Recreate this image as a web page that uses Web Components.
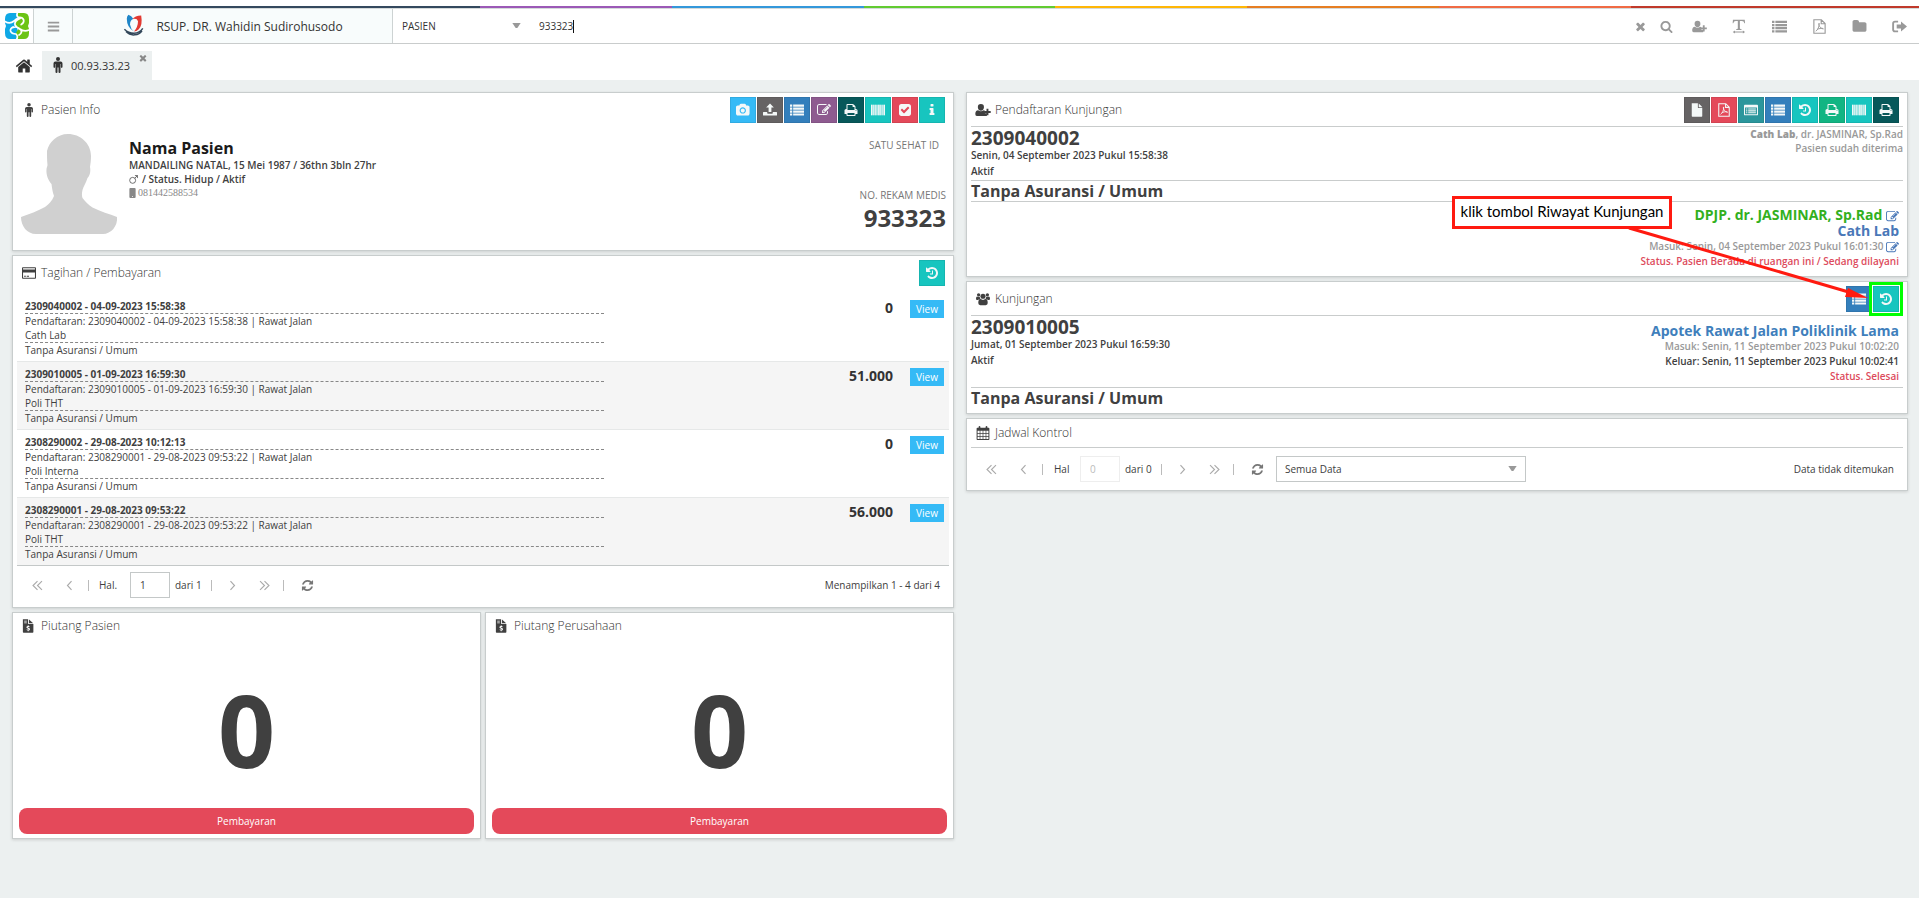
<!DOCTYPE html>
<html lang="id">
<head>
<meta charset="utf-8">
<meta name="viewport" content="width=device-width, initial-scale=1">
<title>RSUP. DR. Wahidin Sudirohusodo</title>
<style>
  html, body { margin: 0; min-height: 100%; background: #ecf0f0; }
  body { font-family: "Open Sans", "Noto Sans", sans-serif; font-size: 10px; color: #404040; }
</style>
</head>
<body>
<sim-app></sim-app>
<script>
const define = (name, html, setup) => {
  const template = document.createElement('template');
  template.innerHTML = html;
  customElements.define(name, class extends HTMLElement {
    connectedCallback() {
      if (this.shadowRoot) return;
      const root = this.attachShadow({ mode: 'open' });
      root.append(template.content.cloneNode(true));
      if (setup) setup(root, this);
    }
  });
};

/* Icon set: [viewBox, markup] */
const FA = '0 0 1792 1792';
const G = '0 0 16 16';
const S = 'fill="none" stroke="currentColor"';
const ICONS = {
  bars: [G, '<path d="M1 2h14v2.4H1zM1 6.800h14v2.400H1zM1 11.600h14V14H1z"/>'],
  times: [FA, '<path d="M1490 1322q0 40-28 68l-136 136q-28 28-68 28t-68-28l-294-294-294 294q-28 28-68 28t-68-28l-136-136q-28-28-28-68t28-68l294-294-294-294q-28-28-28-68t28-68l136-136q28-28 68-28t68 28l294 294 294-294q28-28 68-28t68 28l136 136q28 28 28 68t-28 68l-294 294 294 294q28 28 28 68z"/>'],
  search: [FA, '<path d="M1216 832q0-185-131.5-316.5t-316.5-131.5-316.5 131.5-131.5 316.5 131.5 316.5 316.5 131.5 316.5-131.5 131.5-316.5zm512 832q0 52-38 90t-90 38q-54 0-90-38l-343-342q-179 124-399 124-143 0-273.5-55.5t-225-150-150-225-55.5-273.5 55.5-273.5 150-225 225-150 273.5-55.5 273.5 55.5 225 150 150 225 55.5 273.5q0 220-124 399l343 343q37 37 37 90z"/>'],
  history: [FA, '<path d="M1664 896q0 156-61 298t-164 245-245 164-298 61q-172 0-327-72.5t-264-204.5q-7-10-6.5-22.5t8.5-20.5l137-138q10-9 25-9 16 2 23 12 73 95 179 147t225 52q104 0 198.5-40.5t163.5-109.5 109.5-163.5 40.5-198.5-40.5-198.5-109.5-163.5-163.5-109.5-198.5-40.5q-98 0-188 35.5t-160 101.5l137 138q31 30 14 69-17 40-59 40h-448q-26 0-45-19t-19-45v-448q0-42 40-59 39-17 69 14l130 129q107-101 244.5-156.5t284.5-55.5q156 0 298 61t245 164 164 245 61 298zm-640-288v448q0 14-9 23t-23 9h-320q-14 0-23-9t-9-23v-64q0-14 9-23t23-9h224v-352q0-14 9-23t23-9h64q14 0 23 9t9 23z"/>'],
  edit: [FA, '<path d="M888 1184l116-116-152-152-116 116v56h96v96h56zm440-720q-16-16-33 1l-350 350q-17 17-1 33t33-1l350-350q17-17 1-33zm80 594v190q0 119-84.5 203.5t-203.5 84.5h-832q-119 0-203.5-84.5t-84.5-203.5v-832q0-119 84.5-203.5t203.5-84.5h832q63 0 117 25 15 7 18 23 3 17-9 29l-49 49q-14 14-32 8-23-6-45-6h-832q-66 0-113 47t-47 113v832q0 66 47 113t113 47h832q66 0 113-47t47-113v-126q0-13 9-22l64-64q15-15 35-7t20 29zm-96-738l288 288-672 672h-288v-288zm444 132l-92 92-288-288 92-92q28-28 68-28t68 28l152 152q28 28 28 68t-28 68z"/>'],
  print: [FA, '<path d="M448 1536h896v-256h-896v256zm0-640h896v-384h-160q-40 0-68-28t-28-68v-160h-640v640zm1152 64q0-26-19-45t-45-19-45 19-19 45 19 45 45 19 45-19 19-45zm128 0v416q0 13-9.5 22.5t-22.5 9.5h-224v160q0 40-28 68t-68 28h-960q-40 0-68-28t-28-68v-160h-224q-13 0-22.5-9.5t-9.5-22.5v-416q0-79 56.5-135.5t135.5-56.5h64v-544q0-40 28-68t68-28h672q40 0 88 20t76 48l152 152q28 28 48 76t20 88v256h64q79 0 135.5 56.5t56.5 135.5z"/>'],
  home: [FA, '<path d="M1472 992v480q0 26-19 45t-45 19h-384v-384h-256v384h-384q-26 0-45-19t-19-45v-480q0-1 .5-3t.5-3l575-474 575 474q1 2 1 6zm223-69l-62 74q-8 9-21 11h-3q-13 0-21-7l-692-577-692 577q-12 8-24 7-13-2-21-11l-62-74q-8-10-7-23.5t11-21.5l719-599q32-26 76-26t76 26l244 204v-195q0-14 9-23t23-9h192q14 0 23 9t9 23v408l219 182q10 8 11 21.5t-7 23.5z"/>'],
  refresh: [FA, '<path d="M1639 1056q0 5-1 7-64 268-268 434.5t-478 166.5q-146 0-282.5-55t-243.5-157l-129 129q-19 19-45 19t-45-19-19-45v-448q0-26 19-45t45-19h448q26 0 45 19t19 45-19 45l-137 137q71 66 161 102t187 36q134 0 250-65t186-179q11-17 53-117 8-23 30-23h192q13 0 22.5 9.5t9.5 22.5zm25-800v448q0 26-19 45t-45 19h-448q-26 0-45-19t-19-45 19-45l138-138q-148-137-349-137-134 0-250 65t-186 179q-11 17-53 117-8 23-30 23h-199q-13 0-22.5-9.5t-9.5-22.5v-7q65-268 270-434.5t480-166.5q146 0 284 55.5t245 156.5l130-129q19-19 45-19t45 19 19 45z"/>'],
  folder: [FA, '<path d="M1728 608v704q0 92-66 158t-158 66h-1216q-92 0-158-66t-66-158v-960q0-92 66-158t158-66h320q92 0 158 66t66 158v32h672q92 0 158 66t66 158z"/>'],
  camera: ['-64 0 1984 1792', '<path d="M896 672q119 0 203.5 84.5t84.5 203.5-84.5 203.5-203.5 84.5-203.5-84.5-84.5-203.5 84.5-203.5 203.5-84.5zm704-416q106 0 181 75t75 181v896q0 106-75 181t-181 75h-1408q-106 0-181-75t-75-181v-896q0-106 75-181t181-75h224l51-136q19-49 69.5-84.5t103.5-35.5h512q53 0 103.5 35.5t69.5 84.5l51 136h224zm-704 1152q185 0 316.5-131.5t131.5-316.5-131.5-316.5-316.5-131.5-316.5 131.5-131.5 316.5 131.5 316.5 316.5 131.5z"/>'],
  check: [FA, '<path d="M813 1299l614-614q19-19 19-45t-19-45l-102-102q-19-19-45-19t-45 19l-467 467-211-211q-19-19-45-19t-45 19l-102 102q-19 19-19 45t19 45l358 358q19 19 45 19t45-19zm851-883v960q0 119-84.5 203.5t-203.5 84.5h-960q-119 0-203.5-84.5t-84.5-203.5v-960q0-119 84.5-203.5t203.5-84.5h960q119 0 203.5 84.5t84.5 203.5z"/>'],
  info: [FA, '<path d="M1216 1344v128q0 26-19 45t-45 19h-512q-26 0-45-19t-19-45v-128q0-26 19-45t45-19h64v-384h-64q-26 0-45-19t-19-45v-128q0-26 19-45t45-19h384q26 0 45 19t19 45v576h64q26 0 45 19t19 45zm-128-1152v192q0 26-19 45t-45 19h-256q-26 0-45-19t-19-45v-192q0-26 19-45t45-19h256q26 0 45 19t19 45z"/>'],
  list: [G, '<path d="M0 1.800h2.600v2.400H0zM0 5.200h2.600v2.400H0zM0 8.600h2.600V11H0zM0 12h2.600v2.400H0zM3.600 1.800H16v2.400H3.600zM3.600 5.200H16v2.400H3.600zM3.600 8.600H16V11H3.600zM3.600 12H16v2.400H3.600z"/>'],
  barcode: [G, '<path opacity=".45" d="M0 2h16v12H0z"/><path d="M0 2h1.600v12H0zM2.400 2h.8v12h-.8zM4.200 2h1.200v12H4.200zM6.400 2h.8v12h-.8zM8.200 2h1.600v12H8.200zM10.600 2h.8v12h-.8zM12.200 2h1v12h-1zM14.400 2H16v12h-1.600z"/>'],
  upload: [G, '<path d="M8 .6l4.400 4.600H9.600v5H6.400v-5H3.600zM.6 10.200h4.200v1.200q0 .8.8.800h4.800q.8 0 .8-.8v-1.200h4.200q.6 0 .6.600v3q0 .6-.6.600H.6q-.6 0-.6-.6v-3q0-.6.6-.6z"/>'],
  userplus: ['0 0 18 16', '<path d="M6.600 1.200a3.600 3.600 0 0 1 3.500 3.700c0 2-1.500 4-3.500 4s-3.500-2-3.500-4A3.600 3.600 0 0 1 6.600 1.200zM3.500 8.200q1.300 1.300 3.100 1.300t3.100-1.300q1 .1 1.500.6v3h2.300v2.700q-.4.400-1.300.400H1.900Q.2 14.900.2 12.600q0-4.200 3.300-4.400z"/><path d="M13 6.600h2.200v2.600h2.600v2.200h-2.600V14H13v-2.600h-2.600V9.200H13z"/>'],
  users: [G, '<circle cx="3" cy="3.200" r="1.900"/><circle cx="13" cy="3.200" r="1.900"/><circle cx="8" cy="4.800" r="2.900"/><path d="M0 7.600q0-2.600 1.400-2.600.8.700 2.900.5Q4.400 7 5.200 8q-2 0-2.800 1.200H1.200Q0 9.200 0 7.600zM16 7.600q0-2.600-1.400-2.600-.8.700-2.900.5-.1 1.500-.9 2.500 2 0 2.800 1.200h1.200q1.200 0 1.200-1.600zM5.200 8.100q2.800 1.800 5.600 0 2.600 0 2.600 4.500 0 2.400-2.300 2.400H4.900q-2.300 0-2.300-2.400 0-4.500 2.600-4.500z"/>'],
  person: ['0 0 12 16', '<circle cx="6" cy="2.100" r="2"/><path d="M3.400 4.500h5.200q1.900 0 1.900 1.900v3.700q0 .8-.8.800t-.8-.8V6.900h-.4v8q0 1-1 1t-1-1v-4.300h-1v4.300q0 1-1 1t-1-1v-8h-.4v3.200q0 .8-.8.800t-.8-.8V6.400q0-1.900 1.900-1.900z"/>'],
  width: [G, '<path d="M1 .8h12.600l.3 3.700h-.7Q12.800 2 10.600 2H8.400v7.800q0 1 1.800 1.200v.7H4.400V11q1.800-.2 1.800-1.200V2H4Q1.800 2 1.400 4.500H.7zM.8 13.800l2.300-1.500v1h8.500v-1l2.300 1.500-2.300 1.600v-1H3.100v1z"/>'],
  pdf: [G, `<path ${S} stroke-width="1.200" d="M2 .8h8l4 4v10.400H2zM9.800.8V5H14"/><path ${S} d="M4 13c2-1 4-5 3.600-8.500C6.500 6 8.500 10 12 10.600c.6-.9-3.500-.9-6.500.4"/>`],
  file: [G, '<path d="M2 .4h7V5q0 .8.8.800H14v9q0 .8-.8.800H2.800q-.8 0-.8-.8zM10 .6q.3.100.6.400l3.100 3.200q.2.200.3.600h-4z"/>'],
  bill: [G, '<path fill-rule="evenodd" d="M1 .4h6V5q0 .8.800.8H13v9q0 .8-.8.800H1.800q-.8 0-.8-.8zM8 .6l4.800 4.200H8zM2.500 2v.9h3V2zM2.500 3.900v.9h3v-.9zM6.600 7.200v.8Q5 8.200 5 9.500q0 1 1.800 1.500.9.300.9.700 0 .5-.8.500T5.600 11.700l-.4 1q.6.400 1.400.5v.8h.9v-.8q1.600-.3 1.600-1.600 0-1.100-1.700-1.600-1-.3-1-.6 0-.4.700-.4t1.200.3l.4-.9Q8.100 8 7.500 8v-.8z"/>'],
  table: [G, '<path fill-rule="evenodd" d="M1 2h14q1 0 1 1v10q0 1-1 1H1q-1 0-1-1V3q0-1 1-1zM1.200 5v7.800h13.600V5zM2.400 6.200h1.400v1.200H2.400zM4.800 6.200h8.800v1.200H4.800zM2.400 8.400h1.400v1.200H2.400zM4.800 8.400h8.800v1.200H4.800zM2.400 10.600h1.400v1.200H2.400zM4.800 10.600h8.800v1.200H4.800z"/>'],
  card: [G, '<path fill-rule="evenodd" d="M1 1.500h14q1 0 1 1v11q0 1-1 1H1q-1 0-1-1v-11q0-1 1-1zM1.200 2.700v1.200h13.600V2.700zM1.200 7.500v5.800h13.600V7.500zM2.400 11h2v1.200h-2zM5.400 11h2.600v1.200H5.400z"/>'],
  calendar: [G, '<path fill-rule="evenodd" d="M3 2V1q0-1 1-1t1 1v1h6V1q0-1 1-1t1 1v1h1.400q.9 0 .9.900v12.200q0 .9-.9.900H1.600q-.9 0-.9-.9V2.900q0-.9.9-.9zM1.800 5.500v2.600h2.400V5.500zM5 5.500v2.600h2.600V5.500zM8.400 5.500v2.600H11V5.500zM11.800 5.500v2.600h2.400V5.500zM1.800 8.900v2.500h2.400V8.900zM5 8.900v2.500h2.600V8.900zM8.400 8.900v2.500H11V8.900zM11.800 8.900v2.500h2.400V8.900zM1.800 12.200v2.600h2.400v-2.600zM5 12.200v2.600h2.600v-2.600zM8.400 12.200v2.600H11v-2.600zM11.800 12.200v2.600h2.400v-2.600z"/>'],
  signout: [G, `<path ${S} stroke-width="2" d="M6.500 2.800H3.200q-2 0-2 2v6.400q0 2 2 2h3.300"/><path d="M9.600 2.600L16 8l-6.400 5.400v-3.200H5V5.800h4.600z"/>`],
  first: [G, `<path ${S} stroke-width="1.400" d="M8 2.500L2.500 8 8 13.500M13.500 2.500L8 8l5.500 5.500"/>`],
  prev: [G, `<path ${S} stroke-width="1.400" d="M10.500 2.500L5.500 8l5 5.500"/>`],
  next: [G, `<path ${S} stroke-width="1.400" d="M5.500 2.500l5 5.500-5 5.500"/>`],
  last: [G, `<path ${S} stroke-width="1.400" d="M2.500 2.500L8 8l-5.500 5.500M8 2.500L13.500 8 8 13.500"/>`],
  caret: ['0 0 10 6', '<path d="M0 0h10L6 6H4z"/>'],
  male: [G, `<circle cx="6.500" cy="9.500" r="5.300" ${S} stroke-width="1.300"/><path ${S} stroke-width="1.300" d="M10.300 5.700L15 1M10.500 1H15v4.500"/>`],
  phone: ['0 0 10 16', '<path fill-rule="evenodd" d="M1.500 0h7Q10 0 10 1.500v13q0 1.500-1.500 1.500h-7Q0 16 0 14.500v-13Q0 0 1.500 0zM4.200 13v1.400h1.600V13z"/>'],
  avatar: ['0 0 96 100', '<path d="M47 0C59 0 70 9 70 22c0 4-.5 8-1 11 1 5-.5 9-2.500 11-1.500 5-4 8-5 12-.8 3-.7 6 0 8 3 4 6 7 10 9.500 8 4 17 6.500 24.500 9.500 1 9-6 17-14 17H15C6 100 0 92 0 83c8-3 17-6 24-10 4-3 7-6 9-11-1.500-4-2-8-2.500-12C27 46 25 41 25.500 35c.3-2 1-3 1-4-.5-5-.5-9-.5-14C28 8 36 0 47 0z"/>'],
  brand: ['0 0 24 26', '<path d="M5 0h7.500v26H5Q0 26 0 20v-4l1-3-1-3V6q0-6 5-6z" fill="#0fa8e6"/><path d="M12.500 0H19q5 0 5 6v4l-1 3 1 3v4q0 6-5 6h-6.500q-2-3-1.500-6 1-3 3-4.500Q9 13 11 8q2-4 1.500-8z" fill="#6cc415"/><g fill="none" stroke="#fff" stroke-width="1.700" stroke-linecap="round"><path d="M12.500-.5q-1.500 3.500 1 5 4-.5 5.200 2.500.5 3-2.500 4.500M0 8.500q5 3 9-.5 2.500-3 6-2.500M24 17q-5 2-9-1-3.500-3-7-1.500M11.500 26.500q2-3-.5-5.500-4.500 0-5.500-3-.5-2.500 2.500-4M15 5.500Q9 8 10 12q2 3 6 5 1.500 3-2 5"/></g>'],
  hospital: ['0 0 26 30', '<path d="M6 1q4 1 6 5-4 2-4 7 1 6 5 9Q4 17 4 6q0-3 2-5z" fill="#1f86c8"/><path d="M22 2q2 12-3 17-3 3-6 3 5-6 5-13-1-3-4-3-2 0-3 1 3-5 11-5z" fill="#e23a32"/><path d="M1 19q5 5 12 5t11-6M3 22q5 5 11 4 6-.5 9-5" fill="none" stroke="#33475a" stroke-width="1.800"/>']
};
define('ui-icon', `<style>
  :host { display: inline-flex; flex: none; width: var(--icon-size, 14px); height: var(--icon-size, 14px); }
  svg { width: 100%; height: 100%; fill: currentColor; overflow: visible; }
</style>`, (root, el) => {
  const [box, body] = ICONS[el.getAttribute('name')];
  root.innerHTML += `<svg viewBox="${box}" aria-hidden="true">${body}</svg>`;
});

define('tool-button', `<style>
  :host { display: block; flex: none; position: relative; --icon-size: 14px; }
  button { display: flex; align-items: center; justify-content: center; width: 26px; height: 26px; padding: 0;
    border: 1px solid rgba(0,0,0,.08); background: var(--tone, #17c5bf); color: #f4f8f8; cursor: pointer; }
  :host([highlight])::after { content: ""; position: absolute; inset: -4px; border: 3px solid #00ff00; pointer-events: none; }
</style><button type="button"></button>`, (root, el) => {
  const b = root.querySelector('button');
  b.innerHTML = `<ui-icon name="${el.getAttribute('icon')}"></ui-icon>`;
  b.setAttribute('aria-label', el.getAttribute('label'));
  b.style.setProperty('--tone', el.getAttribute('tone'));
});

define('ui-card', `<style>
  :host { display: block; box-sizing: border-box; background: #fff; border: 1px solid #c8cdcd; box-shadow: 0 1px 3px rgba(0,0,0,.14); padding: 0 4px; }
  header { display: flex; align-items: center; gap: 4px; min-height: var(--head, 34px); padding: 0 4px; box-sizing: border-box; border-bottom: var(--rule, 0) solid #c9cccc; }
  h2 { flex: 1; margin: 0; font-size: 12px; font-weight: 300; line-height: 16px; color: #333; }
  .tools { display: flex; gap: 1px; }
  ui-icon { --icon-size: 14px; width: 16px; }
</style>
<header><h2></h2><div class="tools"><slot name="tools"></slot></div></header>
<slot></slot>`, (root, el) => {
  const icon = document.createElement('ui-icon');
  icon.setAttribute('name', el.getAttribute('icon'));
  root.querySelector('header').prepend(icon);
  root.querySelector('h2').textContent = el.getAttribute('heading');
});

define('app-header', `<style>
  :host { display: block; background: #fff; padding-top: 6px; }
  .stripe { height: 2px; background: linear-gradient(90deg, #34495e 25%, #9b59b6 25% 35%, #3498db 35% 45%, #62cb31 45% 55%, #ffb606 55% 65%, #e67e22 65% 75%, #f06a44 75% 85%, #c0392b 85%); }
  .bar { display: flex; height: 34px; border-top: 1px solid #d5dada; border-bottom: 1px solid #c9cccc; color: #999; }
  .cell { display: flex; align-items: center; justify-content: center; box-sizing: border-box; border-right: 1px solid #cdd3d3; }
  .logo { width: 34px; --icon-size: 26px; }
  .menu { width: 39px; background: #f8fcfc; --icon-size: 13px; }
  .name { width: 320px; gap: 10px; background: #f8fcfc; color: #333; font-size: 12px; --icon-size: 24px; }
  button { display: flex; align-items: center; justify-content: center; padding: 0; border: 0; background: none; color: inherit; cursor: pointer; }
  .pick { position: relative; width: 137px; display: flex; align-items: center; }
  select { width: 100%; height: 100%; padding: 0 9px; border: 0; background: none; appearance: none; font: inherit; color: #333; outline: 0; }
  .pick ui-icon { position: absolute; right: 9px; top: 14px; --icon-size: 9px; height: 5px; pointer-events: none; }
  .find { display: flex; align-items: center; flex: 1; padding-left: 9px; }
  input { width: 34px; padding: 0; border: 0; background: none; font: inherit; color: #333; outline: 0; }
  .cursor { width: 1px; height: 13px; background: #111; }
  nav { display: flex; align-items: center; --icon-size: 15px; }
  nav button { width: 40px; height: 100%; }
  nav .small { width: 26px; --icon-size: 13px; }
</style>
<div class="stripe"></div>
<div class="bar">
  <div class="cell logo"><ui-icon name="brand"></ui-icon></div>
  <button class="cell menu" type="button" aria-label="Menu"><ui-icon name="bars"></ui-icon></button>
  <div class="cell name"><ui-icon name="hospital"></ui-icon><span>RSUP. DR. Wahidin Sudirohusodo</span></div>
  <div class="pick"><select aria-label="Jenis pencarian"><option>PASIEN</option></select><ui-icon name="caret"></ui-icon></div>
  <div class="find"><input aria-label="Cari" value="933323"><span class="cursor"></span></div>
  <nav>
    <button class="small" type="button" aria-label="Hapus"><ui-icon name="times"></ui-icon></button>
    <button class="small" type="button" aria-label="Cari"><ui-icon name="search"></ui-icon></button>
    <button type="button" aria-label="Pasien baru"><ui-icon name="userplus"></ui-icon></button>
    <button type="button" aria-label="Ukuran teks"><ui-icon name="width"></ui-icon></button>
    <button type="button" aria-label="Daftar"><ui-icon name="list"></ui-icon></button>
    <button type="button" aria-label="PDF"><ui-icon name="pdf"></ui-icon></button>
    <button type="button" aria-label="Berkas"><ui-icon name="folder"></ui-icon></button>
    <button type="button" aria-label="Keluar"><ui-icon name="signout"></ui-icon></button>
  </nav>
</div>`);

define('tab-strip', `<style>
  :host { display: flex; align-items: flex-end; height: 36px; background: #fff; color: #333; }
  a { display: flex; align-items: center; height: 28px; color: inherit; text-decoration: none; }
  .home { width: 42px; justify-content: center; box-sizing: border-box; padding-left: 5px; --icon-size: 18px; }
  .tab { display: flex; box-sizing: border-box; width: 110px; height: 29px; padding: 0 4px 0 8px; background: #ecf0f0; justify-content: space-between; }
  .tab a { gap: 5px; font-size: 11px; --icon-size: 16px; }
  button { align-self: flex-start; margin: 2px 0 0; padding: 0; border: 0; background: none; color: #888; --icon-size: 10px; display: flex; }
</style>
<a class="home" href="#" aria-label="Beranda"><ui-icon name="home"></ui-icon></a>
<div class="tab"><a href="#"><ui-icon name="person"></ui-icon>00.93.33.23</a><button type="button" aria-label="Tutup"><ui-icon name="times"></ui-icon></button></div>`);

define('patient-card', `<style>
  :host { display: block; }
  .body { display: flex; padding: 7px 3px 16px 4px; }
  .photo { width: 96px; height: 100px; color: #d0d0d0; margin-right: 12px; }
  .info { flex: 1; padding-top: 4px; font-weight: 600; line-height: 14px; }
  h3 { margin: 0; font-size: 16px; line-height: 20px; font-weight: 700; color: #1a1a1a; }
  p { margin: 0; display: flex; align-items: center; gap: 4px; }
  .status { --icon-size: 9px; }
  .phone { font-family: "Liberation Serif", serif; font-weight: 400; color: #888; --icon-size: 10px; gap: 2px; }
  .phone ui-icon { width: 7px; }
  .ids { display: flex; flex-direction: column; align-items: flex-end; padding-top: 4px; font-weight: 400; line-height: 14px; color: #777; }
  .ids span { padding-right: 7px; flex: 1; }
  .ids strong { font-size: 24px; line-height: 32px; color: #404040; }
</style>
<ui-card icon="person" heading="Pasien Info">
  <tool-button slot="tools" icon="camera" tone="#35baf6" label="Foto"></tool-button>
  <tool-button slot="tools" icon="upload" tone="#666364" label="Unggah"></tool-button>
  <tool-button slot="tools" icon="list" tone="#337fbc" label="Daftar"></tool-button>
  <tool-button slot="tools" icon="edit" tone="#8e5b90" label="Ubah"></tool-button>
  <tool-button slot="tools" icon="print" tone="#07585a" label="Cetak"></tool-button>
  <tool-button slot="tools" icon="barcode" tone="#17c5bf" label="Barcode"></tool-button>
  <tool-button slot="tools" icon="check" tone="#e4495a" label="Verifikasi"></tool-button>
  <tool-button slot="tools" icon="info" tone="#17c5bf" label="Informasi"></tool-button>
  <div class="body">
    <ui-icon class="photo" name="avatar"></ui-icon>
    <div class="info">
      <h3>Nama Pasien</h3>
      <p>MANDAILING NATAL, 15 Mei 1987 / 36thn 3bln 27hr</p>
      <p class="status"><ui-icon name="male"></ui-icon> / Status. Hidup / Aktif</p>
      <p class="phone"><ui-icon name="phone"></ui-icon>081442588534</p>
    </div>
    <div class="ids"><span>SATU SEHAT ID</span><div>NO. REKAM MEDIS</div><strong>933323</strong></div>
  </div>
</ui-card>`);

define('pager-bar', `<style>
  :host { display: flex; align-items: center; height: 38px; padding: 0 9px 0 4px; --icon-size: 13px; }
  button { display: flex; align-items: center; justify-content: center; width: 32px; height: 24px; padding: 0; border: 0; background: none; color: #aaa; }
  button.reload { color: #777; width: 38px; }
  i { width: 1px; height: 11px; background: #bbb; margin: 0 4px 0 3px; }
  label { width: 31px; padding-left: 6px; box-sizing: content-box; }
  :host([disabled]) label { width: 26px; padding-left: 7px; }
  input { box-sizing: border-box; width: 40px; height: 26px; padding: 0 9px; border: 1px solid #c4c8c8; background: #fff; font: inherit; color: #404040; border-radius: 0; }
  input:disabled { border-color: #eee; color: #bbb; }
  .total { width: 33px; padding-left: 5px; white-space: nowrap; }
  .msg { margin-left: auto; }
</style>
<button type="button" aria-label="Halaman pertama"><ui-icon name="first"></ui-icon></button>
<button type="button" aria-label="Sebelumnya"><ui-icon name="prev"></ui-icon></button>
<i></i><label for="page"></label><input id="page"><span class="total"></span><i></i>
<button type="button" aria-label="Berikutnya"><ui-icon name="next"></ui-icon></button>
<button type="button" aria-label="Halaman terakhir"><ui-icon name="last"></ui-icon></button>
<i></i><button type="button" class="reload" aria-label="Muat ulang"><ui-icon name="refresh"></ui-icon></button>
<slot></slot><span class="msg"></span>`, (root, el) => {
  const $ = s => root.querySelector(s);
  $('label').textContent = el.getAttribute('label');
  $('input').value = el.getAttribute('page');
  $('input').disabled = el.hasAttribute('disabled');
  $('.total').textContent = el.getAttribute('total');
  $('.msg').textContent = el.getAttribute('message');
});

const BILLS = [
  ['2309040002 - 04-09-2023 15:58:38', 'Pendaftaran: 2309040002 - 04-09-2023 15:58:38 | Rawat Jalan', 'Cath Lab', '0'],
  ['2309010005 - 01-09-2023 16:59:30', 'Pendaftaran: 2309010005 - 01-09-2023 16:59:30 | Rawat Jalan', 'Poli THT', '51.000'],
  ['2308290002 - 29-08-2023 10:12:13', 'Pendaftaran: 2308290001 - 29-08-2023 09:53:22 | Rawat Jalan', 'Poli Interna', '0'],
  ['2308290001 - 29-08-2023 09:53:22', 'Pendaftaran: 2308290001 - 29-08-2023 09:53:22 | Rawat Jalan', 'Poli THT', '56.000']
];
define('billing-card', `<style>
  :host { display: block; }
  table { width: 100%; margin-top: 3px; border-collapse: collapse; table-layout: fixed; border-bottom: 1px solid #c4c8c8; line-height: 14px; }
  td { padding: 5px 0 4px; vertical-align: top; border-top: 1px solid #e6e8e8; }
  tr:first-child td { border-top-color: transparent; }
  tr:nth-child(even) { background: #f5f5f5; }
  .desc { box-sizing: border-box; padding-left: 8px; width: 63%; }
  .amount { text-align: right; font-size: 14px; font-weight: 700; line-height: 18px; color: #333; }
  .act { box-sizing: border-box; width: 56px; padding: 6px 5px 0 0; text-align: right; }
  .act button { width: 34px; height: 18px; padding: 0; border: 0; background: #35baf6; color: #fff; font: inherit; line-height: 16px; vertical-align: top; }
  .dash { border-bottom: 1px dashed #888; }
  pager-bar { padding-bottom: 3px; }
</style>
<ui-card icon="card" heading="Tagihan / Pembayaran">
  <tool-button slot="tools" icon="history" tone="#17c5bf" label="Riwayat tagihan"></tool-button>
  <table><tbody></tbody></table>
  <pager-bar label="Hal." page="1" total="dari 1" message="Menampilkan 1 - 4 dari 4"></pager-bar>
</ui-card>`, root => {
  root.querySelector('tbody').innerHTML = BILLS.map(([no, reg, unit, sum]) => `<tr>
    <td class="desc"><div class="dash"><b>${no}</b></div><div>${reg}</div><div class="dash">${unit}</div><div>Tanpa Asuransi / Umum</div></td>
    <td class="amount">${sum}</td><td class="act"><button type="button">View</button></td></tr>`).join('');
});

define('receivable-card', `<style>
  :host { display: block; --head: 25px; }
  .sum { display: block; text-align: center; font-size: 100px; font-weight: 700; line-height: 136px; padding: 23px 0 11px; color: #404040; }
  button { display: block; width: calc(100% - 4px); height: 26px; margin: 0 2px 4px; border: 0; border-radius: 8px; background: #e4495a; color: #fff; font: inherit; }
</style>
<ui-card icon="bill"><strong class="sum">0</strong><button type="button">Pembayaran</button></ui-card>`, (root, el) => {
  root.querySelector('ui-card').shadowRoot.querySelector('h2').textContent = el.getAttribute('heading');
});

const RECORD = `
  :host { display: block; --rule: 1px; }
  .top { display: flex; justify-content: space-between; padding-bottom: 1px; font-weight: 600; line-height: 12px; border-bottom: 1px solid #c9cccc; }
  h3 { margin: 0; font-size: 19px; line-height: 22px; font-weight: 700; }
  .payer { margin: 0; font-size: 16px; line-height: 20px; font-weight: 700; }
  p { margin: 0; }
  .state { padding: 4px 0 2px; }
  .side { text-align: right; line-height: 15px; }
  .big { font-size: 14px; line-height: 16px; font-weight: 700; }
  .muted { color: #999; }
  .red { color: #dd4b5c; }
  .blue { color: #3f7fbc; }
  a { color: #4a78b8; --icon-size: 13px; display: inline-flex; vertical-align: middle; }
`;
define('registration-card', `<style>${RECORD}
  .payer { border-bottom: 1px solid #c9cccc; }
  .top .side { line-height: 14px; }
  .detail { padding: 5px 4px 7px 0; font-weight: 600; }
  .green { color: #33b01e; }
  .unit { color: #4a78b8; }
</style>
<ui-card icon="userplus" heading="Pendaftaran Kunjungan">
  <tool-button slot="tools" icon="file" tone="#666364" label="Berkas"></tool-button>
  <tool-button slot="tools" icon="pdf" tone="#e4495a" label="PDF"></tool-button>
  <tool-button slot="tools" icon="table" tone="#2b969c" label="Formulir"></tool-button>
  <tool-button slot="tools" icon="list" tone="#337fbc" label="Daftar"></tool-button>
  <tool-button slot="tools" icon="history" tone="#17c5bf" label="Riwayat"></tool-button>
  <tool-button slot="tools" icon="print" tone="#12b583" label="Cetak bukti"></tool-button>
  <tool-button slot="tools" icon="barcode" tone="#17c5bf" label="Barcode"></tool-button>
  <tool-button slot="tools" icon="print" tone="#07585a" label="Cetak"></tool-button>
  <div class="top">
    <div><h3>2309040002</h3><p>Senin, 04 September 2023 Pukul 15:58:38</p><p class="state">Aktif</p></div>
    <div class="side muted"><p><b>Cath Lab</b>, dr. JASMINAR, Sp.Rad</p><p>Pasien sudah diterima</p></div>
  </div>
  <p class="payer">Tanpa Asuransi / Umum</p>
  <div class="detail side">
    <p class="big green">DPJP. dr. JASMINAR, Sp.Rad <a href="#" aria-label="Ubah DPJP"><ui-icon name="edit"></ui-icon></a></p>
    <p class="big unit">Cath Lab</p>
    <p class="muted">Masuk: Senin, 04 September 2023 Pukul 16:01:30 <a href="#" aria-label="Ubah waktu masuk"><ui-icon name="edit"></ui-icon></a></p>
    <p class="red">Status. Pasien Berada di ruangan ini / Sedang dilayani</p>
  </div>
</ui-card>`);

define('visit-card', `<style>${RECORD}
  .top .side { padding: 7px 4px 2px 0; }
  .payer { padding-bottom: 5px; }
</style>
<ui-card icon="users" heading="Kunjungan">
  <tool-button slot="tools" icon="list" tone="#337fbc" label="Daftar kunjungan"></tool-button>
  <tool-button slot="tools" icon="history" tone="#17c5bf" label="Riwayat Kunjungan" highlight></tool-button>
  <div class="top">
    <div><h3>2309010005</h3><p>Jumat, 01 September 2023 Pukul 16:59:30</p><p class="state">Aktif</p></div>
    <div class="side"><p class="big blue">Apotek Rawat Jalan Poliklinik Lama</p>
      <p class="muted">Masuk: Senin, 11 September 2023 Pukul 10:02:20</p>
      <p>Keluar: Senin, 11 September 2023 Pukul 10:02:41</p>
      <p class="red">Status. Selesai</p></div>
  </div>
  <p class="payer">Tanpa Asuransi / Umum</p>
</ui-card>`);

define('schedule-card', `<style>
  :host { display: block; --rule: 1px; --head: 29px; }
  pager-bar { height: 42px; }
  .filter { position: relative; width: 250px; }
  select { box-sizing: border-box; width: 100%; height: 26px; padding: 0 8px; border: 1px solid #c4c8c8; border-radius: 0; background: #fff; appearance: none; font: inherit; color: #404040; display: block; }
  .filter ui-icon { position: absolute; right: 9px; top: 10px; --icon-size: 9px; height: 5px; color: #999; pointer-events: none; }
</style>
<ui-card icon="calendar" heading="Jadwal Kontrol">
  <pager-bar label="Hal" page="0" total="dari 0" message="Data tidak ditemukan" disabled>
    <div class="filter"><select aria-label="Filter data"><option>Semua Data</option></select><ui-icon name="caret"></ui-icon></div>
  </pager-bar>
</ui-card>`);

define('tour-callout', `<style>
  :host { position: absolute; right: 40px; top: 104px; width: 416px; height: 104px; pointer-events: none; color: #000; }
  span { display: block; box-sizing: border-box; width: 220px; height: 33px; border: 3px solid #ff1a10; background: #fff; text-align: center; font: 15px/24px Lato, Carlito, sans-serif; white-space: nowrap; }
  svg { position: absolute; inset: 0; width: 100%; height: 100%; overflow: visible; }
</style>
<span>klik tombol Riwayat Kunjungan</span>
<svg viewBox="0 0 416 104" aria-hidden="true"><path d="M177 32L400 97" stroke="#ff1a10" stroke-width="3"/><path d="M416 102l-20-10-3 9z" fill="#ff1a10"/></svg>`);

define('sim-app', `<style>
  :host { display: block; }
  main { display: grid; grid-template-columns: minmax(0, 1fr) minmax(0, 1fr); gap: 12px; padding: 12px 11px 12px 12px; align-items: start; }
  .col { position: relative; display: grid; gap: 4px; }
  .pair { display: grid; grid-template-columns: 1fr 1fr; gap: 4px; }
</style>
<app-header></app-header>
<tab-strip></tab-strip>
<main>
  <div class="col">
    <patient-card></patient-card>
    <billing-card></billing-card>
    <div class="pair"><receivable-card heading="Piutang Pasien"></receivable-card><receivable-card heading="Piutang Perusahaan"></receivable-card></div>
  </div>
  <div class="col">
    <registration-card></registration-card>
    <visit-card></visit-card>
    <schedule-card></schedule-card>
    <tour-callout></tour-callout>
  </div>
</main>`);
</script>
</body>
</html>
